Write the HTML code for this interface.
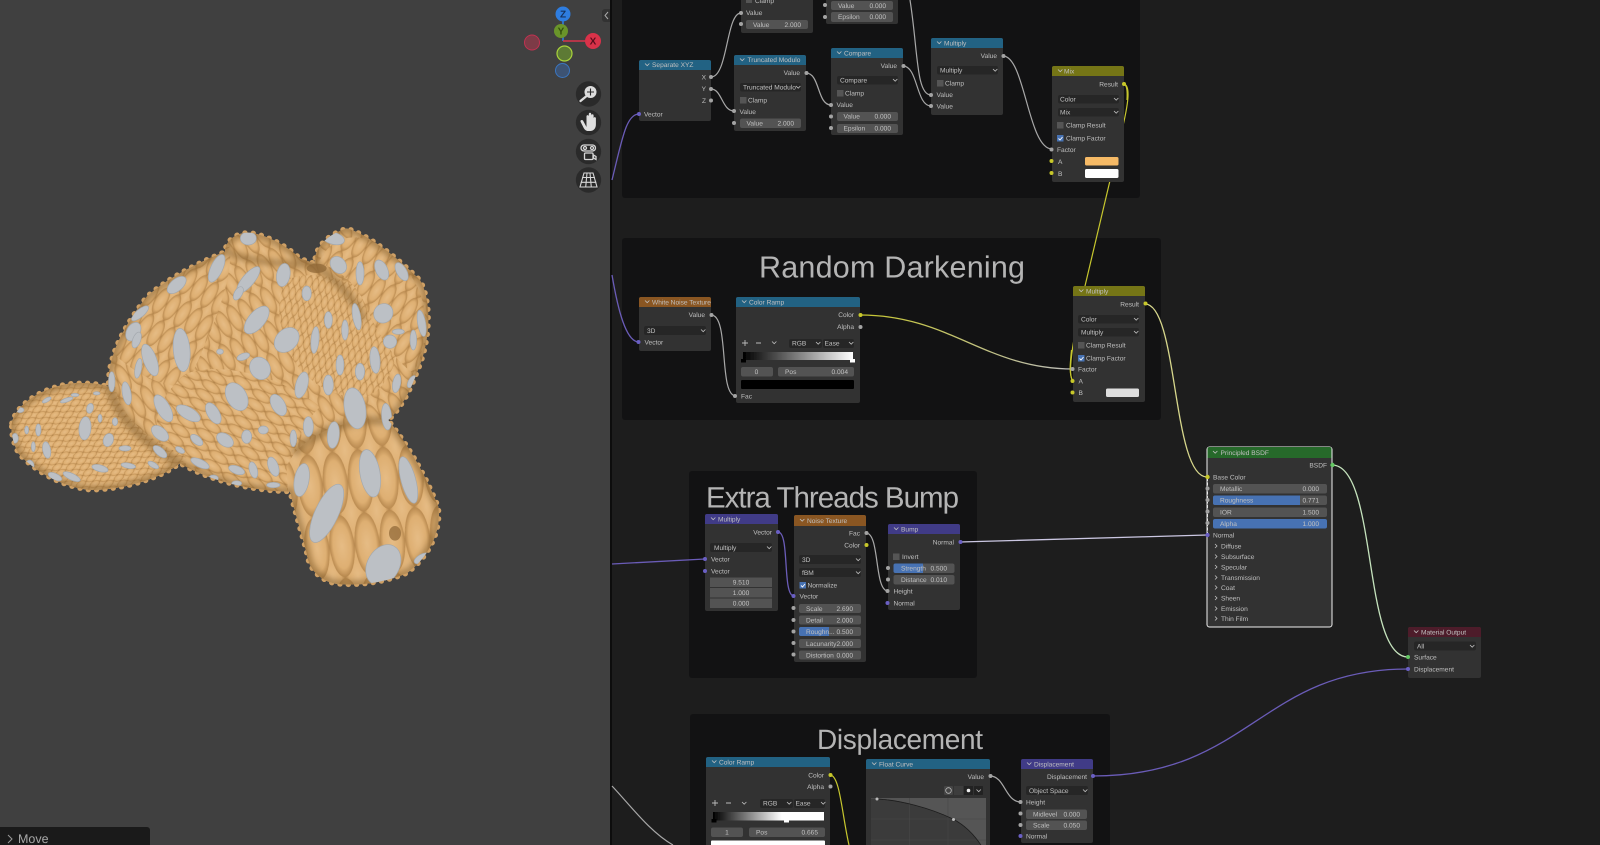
<!DOCTYPE html>
<html lang="en"><head><meta charset="utf-8"><title>Shader nodes</title>
<style>
html,body{margin:0;padding:0;background:#1d1d1d;width:1600px;height:845px;overflow:hidden}
svg{display:block}
text{font-family:"Liberation Sans",sans-serif;font-size:6.6px;fill:#c0c0c0;text-rendering:geometricPrecision}
.r{text-anchor:end}.m{text-anchor:middle}
.n{fill:#303030}.f{fill:#535353}.d{fill:#282828}.u{fill:#555}.k{fill:#4772b3}
.s{fill:#a3a3a3}.y{fill:#c7c729}.p{fill:#6a5fc4}.g{fill:#63c763}
.w{fill:none;stroke:#a8a8a8;stroke-width:1.2}
.v{fill:none;stroke:#6b5cb8;stroke-width:1.3}
.ch{fill:none;stroke:#c0c0c0;stroke-width:.8}
.title{font-size:30.5px;fill:#b4b4b4}
.ty{fill:#bcc0c5;stroke:#a3a8ae;stroke-width:2}
</style></head><body>
<svg width="1600" height="845" viewBox="0 0 1600 845" xmlns="http://www.w3.org/2000/svg">
<defs>
<filter id="b" x="-2%" y="-2%" width="104%" height="104%"><feGaussianBlur stdDeviation=".33"/></filter>
<filter id="b2" x="-2%" y="-2%" width="104%" height="104%"><feGaussianBlur stdDeviation=".5"/></filter>
<filter id="b3" x="-5%" y="-5%" width="110%" height="110%"><feGaussianBlur stdDeviation="9"/></filter>
<path id="c" class="ch" d="M0,0l2.2,2.2 2.2-2.2"/>
<path id="o" class="ch" d="M0,0l2,2-2,2"/>
<radialGradient id="st"><stop offset="0" stop-color="#e6bc85"/><stop offset=".72" stop-color="#deaf72"/><stop offset="1" stop-color="#b98a50"/></radialGradient>
<pattern id="pm" width="38" height="92" patternUnits="userSpaceOnUse" patternTransform="rotate(-28)">
<rect width="38" height="92" fill="#b3854c"/>
<g fill="url(#st)"><ellipse cx="19" cy="46" rx="18" ry="44"/><ellipse cx="0" cy="0" rx="18" ry="44"/><ellipse cx="38" cy="0" rx="18" ry="44"/><ellipse cx="0" cy="92" rx="18" ry="44"/><ellipse cx="38" cy="92" rx="18" ry="44"/></g>
</pattern>
<pattern id="pm2" width="38" height="92" patternUnits="userSpaceOnUse" patternTransform="rotate(32)">
<rect width="38" height="92" fill="#b3854c"/>
<g fill="url(#st)"><ellipse cx="19" cy="46" rx="18" ry="44"/><ellipse cx="0" cy="0" rx="18" ry="44"/><ellipse cx="38" cy="0" rx="18" ry="44"/><ellipse cx="0" cy="92" rx="18" ry="44"/><ellipse cx="38" cy="92" rx="18" ry="44"/></g>
</pattern>
<pattern id="pm3" width="32" height="70" patternUnits="userSpaceOnUse" patternTransform="rotate(-55)">
<rect width="32" height="70" fill="#ad7f47"/>
<g fill="url(#st)"><ellipse cx="16" cy="35" rx="15" ry="33"/><ellipse cx="0" cy="0" rx="15" ry="33"/><ellipse cx="32" cy="0" rx="15" ry="33"/><ellipse cx="0" cy="70" rx="15" ry="33"/><ellipse cx="32" cy="70" rx="15" ry="33"/></g>
</pattern>
<pattern id="ps" width="20" height="44" patternUnits="userSpaceOnUse" patternTransform="rotate(15)">
<rect width="20" height="44" fill="#a37843"/>
<g fill="url(#st)"><ellipse cx="10" cy="22" rx="9.500" ry="21"/><ellipse cx="0" cy="0" rx="9.500" ry="21"/><ellipse cx="20" cy="0" rx="9.500" ry="21"/><ellipse cx="0" cy="44" rx="9.500" ry="21"/><ellipse cx="20" cy="44" rx="9.500" ry="21"/></g>
</pattern>
<pattern id="pt" width="20" height="36" patternUnits="userSpaceOnUse" patternTransform="rotate(60)">
<rect width="20" height="36" fill="#a37843"/>
<g fill="url(#st)"><ellipse cx="10" cy="18" rx="9.500" ry="17"/><ellipse cx="0" cy="0" rx="9.500" ry="17"/><ellipse cx="20" cy="0" rx="9.500" ry="17"/><ellipse cx="0" cy="36" rx="9.500" ry="17"/><ellipse cx="20" cy="36" rx="9.500" ry="17"/></g>
</pattern>
<pattern id="pa" width="76" height="190" patternUnits="userSpaceOnUse" patternTransform="rotate(-6)">
<rect width="76" height="190" fill="#b98b52"/>
<g fill="url(#st)"><ellipse cx="38" cy="95" rx="37" ry="93"/><ellipse cx="0" cy="0" rx="37" ry="93"/><ellipse cx="76" cy="0" rx="37" ry="93"/><ellipse cx="0" cy="190" rx="37" ry="93"/><ellipse cx="76" cy="190" rx="37" ry="93"/></g>
</pattern>
<path id="silp" d="M35,670C45,620 110,570 200,552C250,546 300,550 325,560C322,470 370,380 440,290C500,235 600,185 675,155C675,125 705,98 745,98C790,100 860,135 900,175L945,190C940,150 975,105 1040,85C1100,100 1190,170 1260,240C1295,300 1295,420 1250,520C1225,590 1190,640 1165,660C1220,730 1270,810 1315,920C1325,990 1290,1070 1220,1120C1150,1150 1060,1160 1000,1150C950,1135 925,1100 920,1060C905,1000 885,940 870,875C780,875 640,850 540,790C490,830 380,870 270,870C180,860 100,810 55,760C40,730 32,700 35,670Z"/>
<clipPath id="sil"><use href="#silp"/></clipPath>
<linearGradient id="gy" gradientUnits="userSpaceOnUse" x1="860" y1="0" x2="1073" y2="0"><stop offset="0" stop-color="#c7c72e"/><stop offset="1" stop-color="#bdbdbd"/></linearGradient>
</defs>

<!-- backgrounds -->
<rect width="1600" height="845" fill="#1d1d1d"/>
<rect width="610" height="845" fill="#404040"/>
<rect x="610" width="2" height="845" fill="#0d0d0d"/>

<!-- monkey -->
<g transform="translate(0,200) scale(.33333)" filter="url(#b2)">
<use href="#silp" fill="none" stroke="#cfa065" stroke-width="15" stroke-linecap="round" stroke-dasharray="1 24"/>
<g clip-path="url(#sil)">
<rect width="1400" height="1200" fill="url(#pm)"/>
<path d="M330,450C420,280 560,170 690,140C700,260 620,420 560,560C480,560 400,520 330,450Z" fill="url(#pm2)"/>
<path d="M560,520C680,480 860,540 960,620C880,700 870,800 860,880C740,870 620,830 520,770C440,700 460,600 560,520Z" fill="url(#pm3)"/>
<path d="M0,520H340C345,620 400,700 560,770L480,880H0Z" fill="url(#pt)"/>
<path d="M860,240C950,200 1100,250 1180,330C1230,400 1180,560 1100,590C1000,600 900,540 860,440C830,360 830,290 860,240Z" fill="url(#ps)"/>
<path d="M860,800C900,700 1050,650 1165,660C1240,750 1330,900 1330,1000C1310,1170 1050,1190 960,1160C890,1050 860,900 860,800Z" fill="url(#pa)"/>
<path d="M955,190C1000,90 1100,90 1180,170C1290,260 1300,400 1240,520C1180,480 1120,380 1090,300C1050,230 1000,200 955,190Z" fill="url(#pm2)"/>
<g fill="none" stroke="#7d5a2c" filter="url(#b3)" opacity=".5">
<use href="#silp" stroke-width="26"/>
<path d="M330,560C345,640 420,720 540,790" stroke-width="30"/>
<path d="M880,760C960,680 1080,650 1170,665" stroke-width="26"/>
<path d="M945,195C1000,230 1060,290 1090,360" stroke-width="24"/>
<path d="M680,155C760,190 850,190 940,195" stroke-width="20"/>
</g>
<g fill="#8d6636" opacity=".7"><ellipse cx="1185" cy="1000" rx="18" ry="22"/><ellipse cx="950" cy="205" rx="30" ry="14"/></g>
<g class="ty">
<ellipse cx="745" cy="115" rx="24" ry="20"/>
<ellipse cx="650" cy="205" rx="18" ry="45" transform="rotate(25 650 205)"/>
<ellipse cx="745" cy="240" rx="18" ry="50" transform="rotate(40 745 240)"/>
<ellipse cx="850" cy="225" rx="20" ry="35" transform="rotate(10 850 225)"/>
<ellipse cx="715" cy="280" rx="12" ry="22" transform="rotate(30 715 280)"/>
<ellipse cx="530" cy="255" rx="34" ry="18" transform="rotate(-40 530 255)"/>
<ellipse cx="1000" cy="115" rx="34" ry="18" transform="rotate(15 1000 115)"/>
<ellipse cx="1015" cy="195" rx="22" ry="28" transform="rotate(-40 1015 195)"/>
<ellipse cx="1080" cy="220" rx="12" ry="35"/>
<ellipse cx="1145" cy="210" rx="18" ry="32" transform="rotate(-25 1145 210)"/>
<ellipse cx="1205" cy="215" rx="15" ry="30" transform="rotate(-30 1205 215)"/>
<ellipse cx="1150" cy="340" rx="28" ry="30" transform="rotate(40 1150 340)"/>
<ellipse cx="1170" cy="425" rx="20" ry="20"/>
<ellipse cx="1265" cy="370" rx="12" ry="40" transform="rotate(-10 1265 370)"/>
<ellipse cx="1240" cy="420" rx="10" ry="30"/>
<ellipse cx="1195" cy="395" rx="18" ry="8"/>
<ellipse cx="920" cy="280" rx="14" ry="22"/>
<ellipse cx="770" cy="360" rx="25" ry="50" transform="rotate(40 770 360)"/>
<ellipse cx="860" cy="420" rx="32" ry="42" transform="rotate(45 860 420)"/>
<ellipse cx="945" cy="420" rx="12" ry="40" transform="rotate(5 945 420)"/>
<ellipse cx="985" cy="360" rx="12" ry="25"/>
<ellipse cx="1035" cy="390" rx="10" ry="30"/>
<ellipse cx="1070" cy="350" rx="12" ry="40" transform="rotate(-10 1070 350)"/>
<ellipse cx="1125" cy="480" rx="15" ry="40" transform="rotate(-5 1125 480)"/>
<ellipse cx="1080" cy="515" rx="14" ry="25"/>
<ellipse cx="1020" cy="495" rx="12" ry="30"/>
<ellipse cx="905" cy="555" rx="18" ry="40" transform="rotate(15 905 555)"/>
<ellipse cx="985" cy="555" rx="15" ry="30"/>
<ellipse cx="780" cy="505" rx="30" ry="35" transform="rotate(-30 780 505)"/>
<ellipse cx="730" cy="470" rx="20" ry="10" transform="rotate(-20 730 470)"/>
<ellipse cx="660" cy="455" rx="10" ry="8"/>
<ellipse cx="545" cy="450" rx="25" ry="65" transform="rotate(-5 545 450)"/>
<ellipse cx="450" cy="480" rx="20" ry="50" transform="rotate(-20 450 480)"/>
<ellipse cx="400" cy="395" rx="20" ry="30" transform="rotate(30 400 395)"/>
<ellipse cx="420" cy="340" rx="32" ry="12" transform="rotate(-40 420 340)"/>
<ellipse cx="410" cy="420" rx="12" ry="25" transform="rotate(20 410 420)"/>
<ellipse cx="415" cy="505" rx="10" ry="30" transform="rotate(10 415 505)"/>
<ellipse cx="335" cy="545" rx="10" ry="30"/>
<ellipse cx="380" cy="580" rx="13" ry="35" transform="rotate(-10 380 580)"/>
<ellipse cx="490" cy="625" rx="20" ry="45" transform="rotate(-30 490 625)"/>
<ellipse cx="565" cy="640" rx="40" ry="18" transform="rotate(30 565 640)"/>
<ellipse cx="640" cy="640" rx="18" ry="35" transform="rotate(-30 640 640)"/>
<ellipse cx="710" cy="590" rx="30" ry="45" transform="rotate(-30 710 590)"/>
<ellipse cx="835" cy="615" rx="20" ry="35" transform="rotate(-30 835 615)"/>
<ellipse cx="925" cy="680" rx="15" ry="30"/>
<ellipse cx="1065" cy="625" rx="32" ry="62" transform="rotate(-10 1065 625)"/>
<ellipse cx="1000" cy="705" rx="18" ry="40" transform="rotate(5 1000 705)"/>
<ellipse cx="1110" cy="820" rx="30" ry="72" transform="rotate(-10 1110 820)"/>
<ellipse cx="1225" cy="840" rx="22" ry="72" transform="rotate(-15 1225 840)"/>
<ellipse cx="905" cy="840" rx="22" ry="50" transform="rotate(10 905 840)"/>
<ellipse cx="980" cy="940" rx="35" ry="95" transform="rotate(25 980 940)"/>
<ellipse cx="1150" cy="1095" rx="48" ry="65" transform="rotate(30 1150 1095)"/>
<ellipse cx="1265" cy="1075" rx="25" ry="12" transform="rotate(-30 1265 1075)"/>
<ellipse cx="1160" cy="650" rx="15" ry="40" transform="rotate(-5 1160 650)"/>
<ellipse cx="1190" cy="550" rx="12" ry="28" transform="rotate(10 1190 550)"/>
<ellipse cx="1235" cy="545" rx="10" ry="20" transform="rotate(30 1235 545)"/>
<ellipse cx="480" cy="700" rx="30" ry="18" transform="rotate(40 480 700)"/>
<ellipse cx="590" cy="720" rx="22" ry="12" transform="rotate(40 590 720)"/>
<ellipse cx="675" cy="720" rx="28" ry="18" transform="rotate(35 675 720)"/>
<ellipse cx="740" cy="710" rx="15" ry="20"/>
<ellipse cx="880" cy="715" rx="10" ry="25"/>
<ellipse cx="790" cy="690" rx="15" ry="12"/>
<ellipse cx="600" cy="790" rx="30" ry="12" transform="rotate(25 600 790)"/>
<ellipse cx="710" cy="810" rx="25" ry="12" transform="rotate(20 710 810)"/>
<ellipse cx="760" cy="810" rx="12" ry="25" transform="rotate(-15 760 810)"/>
<ellipse cx="820" cy="800" rx="15" ry="30" transform="rotate(-20 820 800)"/>
<ellipse cx="640" cy="835" rx="15" ry="10"/>
<ellipse cx="710" cy="850" rx="15" ry="8"/>
<ellipse cx="820" cy="855" rx="20" ry="8"/>
<ellipse cx="480" cy="755" rx="25" ry="12" transform="rotate(40 480 755)"/>
<ellipse cx="540" cy="750" rx="15" ry="8" transform="rotate(30 540 750)"/>
<ellipse cx="255" cy="685" rx="18" ry="35" transform="rotate(5 255 685)"/>
<ellipse cx="200" cy="600" rx="20" ry="6" transform="rotate(-20 200 600)"/>
<ellipse cx="140" cy="600" rx="15" ry="6" transform="rotate(-30 140 600)"/>
<ellipse cx="270" cy="625" rx="10" ry="15" transform="rotate(15 270 625)"/>
<ellipse cx="300" cy="655" rx="6" ry="12"/>
<ellipse cx="325" cy="720" rx="15" ry="20" transform="rotate(20 325 720)"/>
<ellipse cx="345" cy="665" rx="8" ry="12"/>
<ellipse cx="140" cy="750" rx="12" ry="25" transform="rotate(-10 140 750)"/>
<ellipse cx="115" cy="690" rx="8" ry="18"/>
<ellipse cx="80" cy="690" rx="6" ry="12"/>
<ellipse cx="60" cy="630" rx="12" ry="8"/>
<ellipse cx="45" cy="715" rx="10" ry="15"/>
<ellipse cx="90" cy="795" rx="12" ry="15" transform="rotate(-20 90 795)"/>
<ellipse cx="165" cy="830" rx="22" ry="10" transform="rotate(25 165 830)"/>
<ellipse cx="215" cy="830" rx="28" ry="10" transform="rotate(25 215 830)"/>
<ellipse cx="300" cy="805" rx="25" ry="10" transform="rotate(15 300 805)"/>
<ellipse cx="385" cy="797" rx="22" ry="8" transform="rotate(10 385 797)"/>
<ellipse cx="460" cy="795" rx="18" ry="8" transform="rotate(30 460 795)"/>
<ellipse cx="375" cy="745" rx="18" ry="8"/>
<ellipse cx="100" cy="740" rx="6" ry="15"/>
<ellipse cx="225" cy="585" rx="12" ry="5"/>
<ellipse cx="290" cy="580" rx="10" ry="5"/>
</g>
</g>
</g>

<!-- move panel -->
<path d="M0,827H147a3,3 0 0 1 3,3V845H0Z" fill="#1a1a1a"/>
<path d="M8,835l4,4-4,4" fill="none" stroke="#999" stroke-width="1"/>
<text x="18" y="843" style="font-size:12.5px;fill:#a8a8a8">Move</text>

<!-- gizmo -->
<g filter="url(#b)">
<path d="M563,14V41" stroke="#2f7de0" stroke-width="1.600"/>
<path d="M563,41H593" stroke="#d9304a" stroke-width="1.600"/>
<circle cx="532" cy="42.500" r="7.500" fill="#7d3a47" stroke="#c23251" stroke-width="1"/>
<circle cx="561" cy="31" r="7" fill="#6a952a"/>
<circle cx="564.500" cy="53.500" r="7.500" fill="#5d7a36" stroke="#a9d33a" stroke-width="1.200"/>
<circle cx="562.500" cy="70.500" r="7" fill="#3c5273" stroke="#3a76c0" stroke-width="1"/>
<circle cx="563" cy="14" r="7.500" fill="#2f7de0"/>
<circle cx="593" cy="41" r="8" fill="#d9304a"/>
<text x="563" y="17.500" class="m" style="font-size:10px;font-weight:bold;fill:#12325f">Z</text>
<text x="561" y="34.500" class="m" style="font-size:10px;font-weight:bold;fill:#33500f">Y</text>
<text x="593" y="44.500" class="m" style="font-size:10px;font-weight:bold;fill:#5a0f1d">X</text>
<!-- collapse tab -->
<path d="M610,9H605a3,3 0 0 0-3,3V19a3,3 0 0 0 3,3H610Z" fill="#303030"/>
<path d="M608,12l-3,3.500 3,3.500" fill="none" stroke="#aaa" stroke-width="1"/>
<!-- tool buttons -->
<g fill="#2c2c2c"><circle cx="588.500" cy="94" r="12.700"/><circle cx="588.500" cy="122.500" r="12.700"/><circle cx="588.500" cy="151.500" r="12.700"/><circle cx="588.500" cy="180" r="12.700"/></g>
<circle cx="590.500" cy="92" r="6" fill="#dcdcdc"/>
<path d="M590.500,88.500v7M587,92h7" stroke="#2c2c2c" stroke-width="1.100"/>
<path d="M586,96.500l-5.500,4.500" stroke="#dcdcdc" stroke-width="2.300" stroke-linecap="round"/>
<path d="M583,120.500l3.500,6.500V116a1.200,1.200 0 0 1 2.300,0v6V114a1.200,1.200 0 0 1 2.400,0v8V115.500a1.200,1.200 0 0 1 2.400,0v7.500V118a1.200,1.200 0 0 1 2.300,0v6.500c0,4-2.600,6.500-5.400,6.500h-2.500c-2,0-3.200-1.200-4.300-3l-3-6c-.9-1.800 1.300-2.500 2.300-1.500Z" fill="#dedede"/>
<g fill="none" stroke="#d6d6d6" stroke-width="1.300">
<rect x="581" y="145" width="14.500" height="6" rx="3"/>
<circle cx="585" cy="148" r="1.500"/><circle cx="592" cy="148" r="1.500"/>
<rect x="584.500" y="153" width="8.500" height="6.500" rx="1"/>
<path d="M596,156.500l-2.500-1.500v3l2.500,1.500Z"/>
</g>
<g fill="none" stroke="#d6d6d6" stroke-width="1.100">
<path d="M584,173H593L597,187H580Z"/>
<path d="M580.700,182.300H596.300M582.200,177.500H594.900M587,173L585.700,187M590,173L591.300,187"/>
</g>
</g>

<!-- frames and titles -->
<g fill="#121213">
<rect x="622" y="-4" width="518" height="202" rx="3"/>
<rect x="622" y="238" width="539" height="182" rx="3"/>
<rect x="689" y="471" width="288" height="207" rx="3"/>
<rect x="690" y="714" width="420" height="140" rx="3"/>
</g>
<g filter="url(#b)">
<text x="759" y="277.500" class="title" textLength="266">Random Darkening</text>
<text x="706" y="507.500" class="title" style="font-size:29.500px" textLength="253">Extra Threads Bump</text>
<text x="817" y="749" class="title" style="font-size:28px" textLength="166">Displacement</text>

<!-- wires -->
<path class="v" d="M612,180C622,140 626,114 639,114"/>
<path class="w" d="M711,77C728,77 726,13 741,13"/>
<path class="w" d="M711,89C722,89 722,111 734,111"/>
<path class="w" d="M806,73C820,73 817,105 831,105"/>
<path class="w" d="M903,66C918,66 916,106 931,106"/>
<path class="w" d="M910,0C918,50 916,95 931,95"/>
<path class="w" d="M1003,56C1025,56 1028,149 1052,149"/>
<path d="M1124,84C1131,86 1128,105 1122,130L1085,286C1075,330 1066,375 1073,381" fill="none" stroke="#c7c72e" stroke-width="1.200"/>
<path class="v" d="M612,275C618,310 626,342 639,342"/>
<path class="w" d="M711,315C730,315 718,396 736,396"/>
<path d="M860,315C950,315 985,369 1073,369" fill="none" stroke="url(#gy)" stroke-width="1.300"/>
<path d="M1145,304C1178,304 1172,477 1207,477" fill="none" stroke="#d7d78c" stroke-width="1.300"/>
<path d="M1332,465C1378,465 1362,657 1408,657" fill="none" stroke="#c5e3bd" stroke-width="1.300"/>
<path class="v" d="M1093,776C1250,776 1260,669 1408,669"/>
<path d="M960,542L1207,535" stroke="#cbc7e2" stroke-width="1.300"/>
<path class="v" d="M612,564L705,559"/>
<path class="v" d="M778,532C790,532 782,596 794,596"/>
<path class="w" d="M866,533C880,533 874,591 888,591"/>
<path class="w" d="M612,786C630,805 650,832 673,845"/>
<path d="M830,775C840,775 842,815 849,845" fill="none" stroke="#c7c72e" stroke-width="1.200"/>
<path class="w" d="M990,776C1005,776 1005,802 1021,802"/>

<!-- top node above trunc -->
<rect class="n" x="741" y="-6" width="72" height="39" rx="2"/>
<rect class="u" x="746" y="-3" width="6" height="6"/><text x="755" y="3">Clamp</text>
<text x="746" y="15">Value</text>
<rect class="f" x="746" y="20" width="62" height="9" rx="2"/><text x="753" y="27">Value</text><text x="801" y="27" class="r">2.000</text>
<circle class="s" cx="741" cy="13" r="2"/><circle class="s" cx="741" cy="24" r="2"/>

<!-- top node above compare -->
<rect class="n" x="826" y="-6" width="72" height="30" rx="2"/>
<rect class="f" x="831" y="1" width="62" height="9" rx="2"/><text x="838" y="8">Value</text><text x="886" y="8" class="r">0.000</text>
<rect class="f" x="831" y="12" width="62" height="10" rx="2"/><text x="838" y="19">Epsilon</text><text x="886" y="19" class="r">0.000</text>
<circle class="s" cx="825" cy="5" r="2"/><circle class="s" cx="825" cy="17" r="2"/>

<!-- Separate XYZ -->
<rect class="n" x="639" y="60" width="72" height="61" rx="2"/>
<path d="M639,70V62a2,2 0 0 1 2-2H709a2,2 0 0 1 2,2V70Z" fill="#246283"/>
<use href="#c" x="645" y="63.500"/><text x="652" y="67">Separate XYZ</text>
<text x="706" y="79.500" class="r">X</text><text x="706" y="91" class="r">Y</text><text x="706" y="103" class="r">Z</text>
<text x="644" y="116.500">Vector</text>
<circle class="s" cx="711" cy="77" r="2"/><circle class="s" cx="711" cy="89" r="2"/><circle class="s" cx="711" cy="100.500" r="2"/><circle class="p" cx="639" cy="114" r="2"/>

<!-- Truncated Modulo -->
<rect class="n" x="734" y="55" width="72" height="76" rx="2"/>
<path d="M734,65V57a2,2 0 0 1 2-2H804a2,2 0 0 1 2,2V65Z" fill="#246283"/>
<use href="#c" x="740" y="58.500"/><text x="747.500" y="62">Truncated Modulo</text>
<text x="800" y="75" class="r">Value</text>
<rect class="d" x="740" y="83" width="61" height="8.500" rx="2"/><text x="743" y="89.500">Truncated Modulo</text><use href="#c" x="796" y="86"/>
<rect class="u" x="740" y="97" width="6.500" height="6.500"/><text x="748" y="102.500">Clamp</text>
<text x="739.500" y="114">Value</text>
<rect class="f" x="740" y="118.500" width="61" height="9.500" rx="2"/><text x="746.500" y="125.500">Value</text><text x="794" y="125.500" class="r">2.000</text>
<circle class="s" cx="806.500" cy="73" r="2"/><circle class="s" cx="734" cy="111" r="2"/><circle class="s" cx="734" cy="123" r="2"/>

<!-- Compare -->
<rect class="n" x="831" y="48" width="72" height="87" rx="2"/>
<path d="M831,58V50a2,2 0 0 1 2-2H901a2,2 0 0 1 2,2V58Z" fill="#246283"/>
<use href="#c" x="837" y="51.500"/><text x="844" y="55.500">Compare</text>
<text x="897" y="68" class="r">Value</text>
<rect class="d" x="837" y="76" width="61" height="8.500" rx="2"/><text x="840" y="82.500">Compare</text><use href="#c" x="893" y="79"/>
<rect class="u" x="837" y="90" width="6.500" height="6.500"/><text x="845" y="95.500">Clamp</text>
<text x="836.500" y="107">Value</text>
<rect class="f" x="837" y="112" width="61" height="9" rx="2"/><text x="843.500" y="118.500">Value</text><text x="891" y="118.500" class="r">0.000</text>
<rect class="f" x="837" y="124" width="61" height="9" rx="2"/><text x="843.500" y="130.500">Epsilon</text><text x="891" y="130.500" class="r">0.000</text>
<circle class="s" cx="903.500" cy="66" r="2"/><circle class="s" cx="831" cy="105" r="2"/><circle class="s" cx="831" cy="116.500" r="2"/><circle class="s" cx="831" cy="128" r="2"/>

<!-- Multiply blue -->
<rect class="n" x="931" y="38" width="72" height="77" rx="2"/>
<path d="M931,48V40a2,2 0 0 1 2-2H1001a2,2 0 0 1 2,2V48Z" fill="#246283"/>
<use href="#c" x="937" y="41.500"/><text x="944" y="45.500">Multiply</text>
<text x="997" y="58" class="r">Value</text>
<rect class="d" x="937" y="66" width="61" height="8.500" rx="2"/><text x="940" y="72.500">Multiply</text><use href="#c" x="993" y="69"/>
<rect class="u" x="937" y="80" width="6.500" height="6.500"/><text x="945" y="85.500">Clamp</text>
<text x="936.500" y="97">Value</text><text x="936.500" y="108.500">Value</text>
<circle class="s" cx="1003.500" cy="56" r="2"/><circle class="s" cx="931" cy="95" r="2"/><circle class="s" cx="931" cy="106" r="2"/>

<!-- Mix -->
<rect class="n" x="1052" y="66" width="72" height="116" rx="2"/>
<path d="M1052,76V68a2,2 0 0 1 2-2H1122a2,2 0 0 1 2,2V76Z" fill="#757518"/>
<use href="#c" x="1058" y="69.500"/><text x="1064" y="73.500">Mix</text>
<text x="1118" y="86.500" class="r">Result</text>
<rect class="d" x="1058" y="95" width="61" height="8.500" rx="2"/><text x="1060" y="101.500">Color</text><use href="#c" x="1114" y="98"/>
<rect class="d" x="1058" y="108" width="61" height="8.500" rx="2"/><text x="1060" y="114.500">Mix</text><use href="#c" x="1114" y="111"/>
<rect class="u" x="1057" y="122" width="6.500" height="6.500"/><text x="1066" y="127.500">Clamp Result</text>
<rect class="k" x="1057" y="135" width="6.500" height="6.500"/><path d="M1058.500,138.500l1.500,1.500 2.500-3" fill="none" stroke="#fff" stroke-width=".9"/><text x="1066" y="140.500">Clamp Factor</text>
<text x="1057" y="152">Factor</text><text x="1058" y="164">A</text><text x="1058" y="176">B</text>
<rect x="1085" y="157" width="33.500" height="8.500" rx="1.500" fill="#f6ba66"/>
<rect x="1085" y="169" width="33.500" height="9" rx="1.500" fill="#fff"/>
<path d="M1124,84C1127,85 1127.500,92 1127,100" fill="none" stroke="#c7c72e" stroke-width="1.200"/>
<circle class="y" cx="1124" cy="84" r="2"/><circle class="s" cx="1051.500" cy="149.500" r="2"/><circle class="y" cx="1051.500" cy="161" r="2"/><circle class="y" cx="1051.500" cy="173" r="2"/>

<!-- White Noise -->
<rect class="n" x="639" y="297" width="72" height="54" rx="2"/>
<path d="M639,307V299a2,2 0 0 1 2-2H709a2,2 0 0 1 2,2V307Z" fill="#8a5620"/>
<use href="#c" x="645" y="300.500"/><text x="652" y="304.500">White Noise Texture</text>
<text x="705" y="317" class="r">Value</text>
<rect class="d" x="644" y="326" width="62" height="9" rx="2"/><text x="647" y="333">3D</text><use href="#c" x="701" y="329.500"/>
<text x="644.500" y="344.500">Vector</text>
<circle class="s" cx="711.500" cy="315" r="2"/><circle class="p" cx="638.500" cy="342" r="2"/>

<!-- Color Ramp 1 -->
<rect class="n" x="736" y="297" width="124" height="106" rx="2"/>
<path d="M736,307V299a2,2 0 0 1 2-2H858a2,2 0 0 1 2,2V307Z" fill="#246283"/>
<use href="#c" x="742" y="300.500"/><text x="749" y="304.500">Color Ramp</text>
<text x="854" y="317" class="r">Color</text><text x="854" y="329" class="r">Alpha</text>
<path d="M742,343h6M745,340v6M756,343h5" stroke="#bbb" stroke-width=".9"/><use href="#c" x="772" y="341.500"/>
<rect class="d" x="789" y="339" width="33" height="9" rx="2"/><text x="792" y="345.500">RGB</text><use href="#c" x="816" y="342"/>
<rect class="d" x="823" y="339" width="31" height="9" rx="2"/><text x="824.500" y="345.500">Ease</text><use href="#c" x="849" y="342"/>
<linearGradient id="r1"><stop offset="0" stop-color="#000"/><stop offset="1" stop-color="#fff"/></linearGradient>
<rect x="743" y="352" width="110" height="8" fill="url(#r1)"/>
<rect x="741" y="359" width="5" height="3.500" fill="#000"/><rect x="850" y="359" width="5" height="3.500" fill="#fff"/>
<rect class="f" x="741" y="367" width="32" height="9.500" rx="2"/><text x="756.500" y="374" class="m">0</text>
<rect class="f" x="778" y="367" width="76" height="9.500" rx="2"/><text x="785" y="374">Pos</text><text x="848" y="374" class="r">0.004</text>
<rect x="741" y="380" width="113" height="9" rx="1" fill="#000"/>
<text x="741" y="398.500">Fac</text>
<circle class="y" cx="860.500" cy="315" r="2"/><circle class="s" cx="860.500" cy="327" r="2"/><circle class="s" cx="735" cy="396" r="2"/>

<!-- Multiply olive -->
<rect class="n" x="1073" y="286" width="72" height="116" rx="2"/>
<path d="M1073,296V288a2,2 0 0 1 2-2H1143a2,2 0 0 1 2,2V296Z" fill="#757518"/>
<use href="#c" x="1079" y="289.500"/><text x="1086" y="293.500">Multiply</text>
<text x="1139" y="306.500" class="r">Result</text>
<rect class="d" x="1078" y="315" width="61" height="8.500" rx="2"/><text x="1081" y="321.500">Color</text><use href="#c" x="1134" y="318"/>
<rect class="d" x="1078" y="328" width="61" height="8.500" rx="2"/><text x="1081" y="334.500">Multiply</text><use href="#c" x="1134" y="331"/>
<rect class="u" x="1078" y="342" width="6.500" height="6.500"/><text x="1086" y="347.500">Clamp Result</text>
<rect class="k" x="1078" y="355" width="6.500" height="6.500"/><path d="M1079.500,358.500l1.500,1.500 2.500-3" fill="none" stroke="#fff" stroke-width=".9"/><text x="1086" y="360.500">Clamp Factor</text>
<text x="1078" y="371.500">Factor</text><text x="1078.500" y="383.500">A</text><text x="1078.500" y="395">B</text>
<rect x="1106" y="388.500" width="33" height="8.500" rx="1.500" fill="#dedede"/>
<path d="M1071.500,350C1070,365 1069,375 1073,381" fill="none" stroke="#c7c72e" stroke-width="1.200"/>
<circle class="y" cx="1145.500" cy="303.500" r="2"/><circle class="s" cx="1072.500" cy="369" r="2"/><circle class="y" cx="1072.500" cy="381" r="2"/><circle class="y" cx="1072.500" cy="392.500" r="2"/>

<!-- Multiply purple -->
<rect class="n" x="705" y="514" width="73" height="97" rx="2"/>
<path d="M705,524V516a2,2 0 0 1 2-2H776a2,2 0 0 1 2,2V524Z" fill="#3f3a87"/>
<use href="#c" x="711" y="517.500"/><text x="718" y="521.500">Multiply</text>
<text x="772" y="534.500" class="r">Vector</text>
<rect class="d" x="710" y="543" width="62" height="9" rx="2"/><text x="714" y="550">Multiply</text><use href="#c" x="767" y="546.500"/>
<text x="711" y="561.500">Vector</text><text x="711" y="573.500">Vector</text>
<rect class="f" x="710" y="577.500" width="62" height="9.500"/><text x="741" y="584.500" class="m">9.510</text>
<rect class="f" x="710" y="588" width="62" height="9.500"/><text x="741" y="595" class="m">1.000</text>
<rect class="f" x="710" y="598.500" width="62" height="9.500"/><text x="741" y="605.500" class="m">0.000</text>
<circle class="p" cx="778" cy="532" r="2"/><circle class="p" cx="705" cy="559" r="2"/><circle class="p" cx="705" cy="571" r="2"/>

<!-- Noise Texture -->
<rect class="n" x="794" y="515" width="72" height="147" rx="2"/>
<path d="M794,526V517a2,2 0 0 1 2-2H864a2,2 0 0 1 2,2V526Z" fill="#8a5620"/>
<use href="#c" x="800" y="519"/><text x="807" y="523">Noise Texture</text>
<text x="860" y="535.500" class="r">Fac</text><text x="860" y="547.500" class="r">Color</text>
<rect class="d" x="799" y="555" width="62" height="9" rx="2"/><text x="802" y="562">3D</text><use href="#c" x="856" y="558.500"/>
<rect class="d" x="799" y="568" width="62" height="9" rx="2"/><text x="802" y="575">fBM</text><use href="#c" x="856" y="571.500"/>
<rect class="k" x="799.500" y="582" width="6.500" height="6.500"/><path d="M801,585.500l1.500,1.500 2.500-3" fill="none" stroke="#fff" stroke-width=".9"/><text x="807.500" y="587.500">Normalize</text>
<text x="799.500" y="598.500">Vector</text>
<rect class="f" x="799" y="604" width="62" height="9" rx="2"/><text x="806" y="611">Scale</text><text x="853" y="611" class="r">2.690</text>
<rect class="f" x="799" y="615.500" width="62" height="9" rx="2"/><text x="806" y="622.500">Detail</text><text x="853" y="622.500" class="r">2.000</text>
<rect class="f" x="799" y="627" width="62" height="9" rx="2"/><path d="M799,629a2,2 0 0 1 2-2H829V636H801a2,2 0 0 1-2-2Z" fill="#4772b3"/><text x="806" y="634">Roughn...</text><text x="853" y="634" class="r">0.500</text>
<rect class="f" x="799" y="639" width="62" height="9" rx="2"/><text x="806" y="646">Lacunarity</text><text x="853" y="646" class="r">2.000</text>
<rect class="f" x="799" y="650.500" width="62" height="9" rx="2"/><text x="806" y="657.500">Distortion</text><text x="853" y="657.500" class="r">0.000</text>
<circle class="s" cx="866.500" cy="533" r="2"/><circle class="y" cx="866.500" cy="545" r="2"/><circle class="p" cx="793.500" cy="596" r="2"/><circle class="s" cx="793.500" cy="608" r="2"/><circle class="s" cx="793.500" cy="620" r="2"/><circle class="s" cx="793.500" cy="631.500" r="2"/><circle class="s" cx="793.500" cy="643" r="2"/><circle class="s" cx="793.500" cy="654.500" r="2"/>

<!-- Bump -->
<rect class="n" x="888" y="524" width="72" height="86" rx="2"/>
<path d="M888,534V526a2,2 0 0 1 2-2H958a2,2 0 0 1 2,2V534Z" fill="#3f3a87"/>
<use href="#c" x="894" y="527.500"/><text x="901" y="531.500">Bump</text>
<text x="954" y="544.500" class="r">Normal</text>
<rect class="u" x="893" y="553.500" width="6.500" height="6.500"/><text x="902" y="559">Invert</text>
<rect class="f" x="893.500" y="563.500" width="61" height="9.500" rx="2"/><path d="M893.500,565.500a2,2 0 0 1 2-2H923V573H895.500a2,2 0 0 1-2-2Z" fill="#4772b3"/><text x="901" y="570.500">Strength</text><text x="947" y="570.500" class="r">0.500</text>
<rect class="f" x="893.500" y="575" width="61" height="9.500" rx="2"/><text x="901" y="582">Distance</text><text x="947" y="582" class="r">0.010</text>
<text x="893.500" y="593.500">Height</text><text x="893.500" y="605.500">Normal</text>
<circle class="p" cx="960.500" cy="542" r="2"/><circle class="s" cx="888" cy="568" r="2"/><circle class="s" cx="888" cy="579.500" r="2"/><circle class="s" cx="887.500" cy="591" r="2"/><circle class="p" cx="887.500" cy="603" r="2"/>

<!-- Principled BSDF -->
<rect x="1207" y="447" width="125" height="180" rx="2.500" fill="#303030" stroke="#f0f0f0" stroke-width="1"/>
<path d="M1207.500,458V449a2,2 0 0 1 2-2H1329.500a2,2 0 0 1 2,2V458Z" fill="#27692c"/>
<use href="#c" x="1213" y="451"/><text x="1220.500" y="455">Principled BSDF</text>
<text x="1327" y="467.500" class="r">BSDF</text>
<text x="1213" y="479.500">Base Color</text>
<rect class="f" x="1213" y="484" width="114" height="9.500" rx="2"/><text x="1220" y="491">Metallic</text><text x="1319" y="491" class="r">0.000</text>
<rect class="f" x="1213" y="495.500" width="114" height="9.500" rx="2"/><path d="M1213,497.500a2,2 0 0 1 2-2H1300V505H1215a2,2 0 0 1-2-2Z" fill="#4772b3"/><text x="1220" y="502.500">Roughness</text><text x="1319" y="502.500" class="r">0.771</text>
<rect class="f" x="1213" y="507.500" width="114" height="9.500" rx="2"/><text x="1220" y="514.500">IOR</text><text x="1319" y="514.500" class="r">1.500</text>
<rect x="1213" y="519" width="114" height="9.500" rx="2" fill="#4772b3"/><text x="1220" y="526">Alpha</text><text x="1319" y="526" class="r">1.000</text>
<text x="1213" y="537.500">Normal</text>
<use href="#o" x="1215" y="544"/><text x="1221" y="548.500">Diffuse</text>
<use href="#o" x="1215" y="554.500"/><text x="1221" y="559">Subsurface</text>
<use href="#o" x="1215" y="565"/><text x="1221" y="569.500">Specular</text>
<use href="#o" x="1215" y="575.500"/><text x="1221" y="580">Transmission</text>
<use href="#o" x="1215" y="585.500"/><text x="1221" y="590">Coat</text>
<use href="#o" x="1215" y="596"/><text x="1221" y="600.500">Sheen</text>
<use href="#o" x="1215" y="606.500"/><text x="1221" y="611">Emission</text>
<use href="#o" x="1215" y="616.500"/><text x="1221" y="621">Thin Film</text>
<path d="M1207.500,478V535" stroke="#e8e8e8" stroke-width="1" stroke-dasharray="3 1.500"/>
<circle class="g" cx="1332.500" cy="465" r="2.200"/><circle class="y" cx="1207.500" cy="477" r="2.200"/><circle class="s" cx="1207.500" cy="488.500" r="2"/><circle class="s" cx="1207.500" cy="500" r="2"/><circle class="s" cx="1207.500" cy="511.500" r="2"/><circle class="s" cx="1207.500" cy="523" r="2"/><circle class="p" cx="1207.500" cy="535" r="2.200"/>

<!-- Material Output -->
<rect class="n" x="1408" y="627" width="73" height="51" rx="2"/>
<path d="M1408,637V629a2,2 0 0 1 2-2H1479a2,2 0 0 1 2,2V637Z" fill="#4e1f2c"/>
<use href="#c" x="1414" y="630.500"/><text x="1421" y="634.500">Material Output</text>
<rect class="d" x="1414" y="641.500" width="62" height="9" rx="2"/><text x="1417" y="648.500">All</text><use href="#c" x="1470" y="645"/>
<text x="1414" y="659.500">Surface</text><text x="1414" y="671.500">Displacement</text>
<circle class="g" cx="1408" cy="657" r="2"/><circle class="p" cx="1408" cy="669" r="2"/>

<!-- Color Ramp 2 -->
<rect class="n" x="706" y="757" width="124" height="92" rx="2"/>
<path d="M706,767V759a2,2 0 0 1 2-2H828a2,2 0 0 1 2,2V767Z" fill="#246283"/>
<use href="#c" x="712" y="760.500"/><text x="719" y="764.500">Color Ramp</text>
<text x="824" y="777.500" class="r">Color</text><text x="824" y="789" class="r">Alpha</text>
<path d="M712,803h6M715,800v6M726,803h5" stroke="#bbb" stroke-width=".9"/><use href="#c" x="742" y="802"/>
<rect class="d" x="760" y="799" width="33" height="9" rx="2"/><text x="763" y="805.500">RGB</text><use href="#c" x="787" y="802"/>
<rect class="d" x="794" y="799" width="31" height="9" rx="2"/><text x="795.500" y="805.500">Ease</text><use href="#c" x="821" y="802"/>
<linearGradient id="r2"><stop offset="0" stop-color="#000"/><stop offset=".62" stop-color="#fff"/></linearGradient>
<rect x="713" y="812" width="111" height="8.500" fill="url(#r2)"/>
<rect x="711.500" y="819" width="5" height="3.500" fill="#000"/><rect x="784" y="818" width="5" height="4.500" fill="#fff"/>
<rect class="f" x="711" y="827.500" width="32" height="9.500" rx="2"/><text x="727" y="834.500" class="m">1</text>
<rect class="f" x="749" y="827.500" width="76" height="9.500" rx="2"/><text x="756" y="834.500">Pos</text><text x="818" y="834.500" class="r">0.665</text>
<rect x="711" y="840.500" width="114" height="9" rx="1" fill="#fff"/>
<circle class="y" cx="830.500" cy="775" r="2"/><circle class="s" cx="830.500" cy="786.500" r="2"/>

<!-- Float Curve -->
<rect class="n" x="866" y="759" width="124" height="90" rx="2"/>
<path d="M866,769V761a2,2 0 0 1 2-2H988a2,2 0 0 1 2,2V769Z" fill="#246283"/>
<use href="#c" x="872" y="762.500"/><text x="879" y="766.500">Float Curve</text>
<text x="984" y="779" class="r">Value</text>
<rect x="944" y="786" width="9" height="9" rx="1" fill="#444"/><circle cx="948.500" cy="790.500" r="2.800" fill="none" stroke="#bbb" stroke-width=".8"/>
<rect x="954" y="786" width="9" height="9" fill="#3d3d3d"/>
<rect x="964" y="786" width="9" height="9" fill="#222"/><circle cx="968.500" cy="790.500" r="1.800" fill="#eee"/>
<rect x="974" y="786" width="9" height="9" rx="1" fill="#222"/><use href="#c" x="976.500" y="789.500"/>
<rect x="871" y="798" width="115" height="50" fill="#555"/>
<path d="M871,798.500H877C900,800 930,808 953,819C968,827 977,838 984,850H871Z" fill="#3a3a3a"/>
<path d="M909.500,798V848M948,798V848M871,819H986M871,840H986" stroke="#484848" stroke-width=".6"/>
<path d="M877,799C900,800 930,808 953,819C968,827 977,838 984,850" fill="none" stroke="#1e1e1e" stroke-width=".8"/>
<circle cx="877" cy="799" r="1.500" fill="#bbb"/><circle cx="953.500" cy="819.500" r="1.500" fill="#bbb"/>
<circle class="s" cx="990.500" cy="776" r="2"/>

<!-- Displacement -->
<rect class="n" x="1021" y="759" width="72" height="84" rx="2"/>
<path d="M1021,769V761a2,2 0 0 1 2-2H1091a2,2 0 0 1 2,2V769Z" fill="#3f3a87"/>
<use href="#c" x="1027" y="762.500"/><text x="1034" y="766.500">Displacement</text>
<text x="1087" y="779" class="r">Displacement</text>
<rect class="d" x="1026" y="786" width="62" height="9" rx="2"/><text x="1029" y="793">Object Space</text><use href="#c" x="1083" y="789.500"/>
<text x="1026" y="804.500">Height</text>
<rect class="f" x="1026" y="809.500" width="61" height="9.500" rx="2"/><text x="1033" y="816.500">Midlevel</text><text x="1080" y="816.500" class="r">0.000</text>
<rect class="f" x="1026" y="820.500" width="61" height="9.500" rx="2"/><text x="1033" y="827.500">Scale</text><text x="1080" y="827.500" class="r">0.050</text>
<text x="1026" y="838.500">Normal</text>
<circle class="p" cx="1093" cy="776" r="2"/><circle class="s" cx="1020.500" cy="802" r="2"/><circle class="s" cx="1020.500" cy="813.500" r="2"/><circle class="s" cx="1020.500" cy="825" r="2"/><circle class="p" cx="1020.500" cy="836" r="2"/>
</g>
</svg>
</body></html>
